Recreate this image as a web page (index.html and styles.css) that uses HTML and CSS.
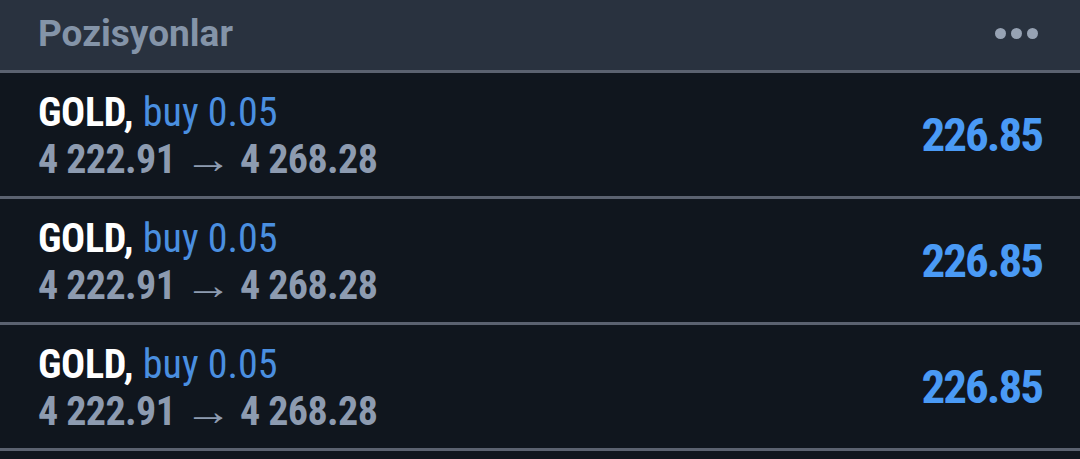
FILE: index.html
```html
<!DOCTYPE html>
<html>
<head>
<meta charset="utf-8">
<link rel="stylesheet" href="styles.css">
</head>
<body>
<div class="panel">
  <div class="header">
    <span class="title">Pozisyonlar</span>
    <span class="dots"><i></i><i></i><i></i></span>
  </div>
  <div class="row">
    <div class="info">
      <div class="line1"><span class="sym">GOLD,</span> <span class="side">buy 0.05</span></div>
      <div class="line2">4 222.91 <span class="arrow">→</span> 4 268.28</div>
    </div>
    <div class="profit">226.85</div>
  </div>
  <div class="row">
    <div class="info">
      <div class="line1"><span class="sym">GOLD,</span> <span class="side">buy 0.05</span></div>
      <div class="line2">4 222.91 <span class="arrow">→</span> 4 268.28</div>
    </div>
    <div class="profit">226.85</div>
  </div>
  <div class="row">
    <div class="info">
      <div class="line1"><span class="sym">GOLD,</span> <span class="side">buy 0.05</span></div>
      <div class="line2">4 222.91 <span class="arrow">→</span> 4 268.28</div>
    </div>
    <div class="profit">226.85</div>
  </div>
</div>
</body>
</html>
```

FILE: styles.css
```css
html, body {
  margin: 0;
  padding: 0;
  background: #10161e;
  width: 1080px;
  height: 459px;
  overflow: hidden;
}
.panel {
  font-family: "Roboto Condensed", Roboto, "Liberation Sans", sans-serif;
}
.header {
  height: 73px;
  background: #29323f;
  display: flex;
  align-items: center;
  justify-content: space-between;
  padding: 0 42px 3px 38px;
  box-sizing: border-box;
  border-bottom: 3px solid #5b6270;
}
.title {
  font-family: Roboto, sans-serif;
  font-weight: 700;
  font-size: 37px;
  color: #8494a8;
}
.dots {
  display: flex;
  gap: 5px;
}
.dots i {
  width: 11px;
  height: 11px;
  border-radius: 50%;
  background: #97a3b4;
  display: block;
}
.row {
  height: 126px;
  box-sizing: border-box;
  border-bottom: 3px solid #5b6270;
  background: #10161e;
  display: flex;
  align-items: center;
  justify-content: space-between;
  padding: 0 38px 0 38px;
  font-stretch: 75%;
}
.info {
  line-height: 47px;
  font-size: 40px;
  letter-spacing: -0.6px;
  margin-top: 2px;
}
.sym {
  color: #ffffff;
  font-weight: 700;
  letter-spacing: -0.3px;
}
.side {
  color: #4a8fe0;
  letter-spacing: 0;
  margin-left: 1px;
}
.line2 {
  color: #8d9bb0;
  font-weight: 700;
}
.arrow {
  font-weight: 400;
  font-size: 40px;
  display: inline-block;
  transform: scaleX(1.2);
  margin: 0 4px;
}
.profit {
  color: #4a9af5;
  font-weight: 700;
  font-size: 47px;
  letter-spacing: -2px;
  margin-right: 0;
}
```
